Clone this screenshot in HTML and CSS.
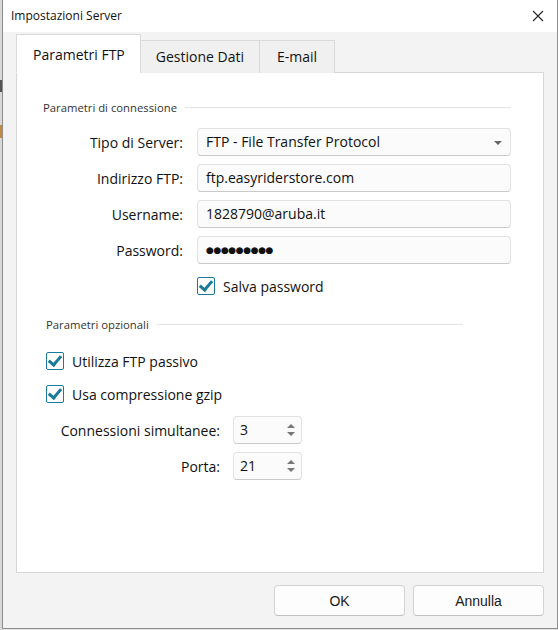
FILE: index.html
```html
<!DOCTYPE html>
<html lang="it">
<head>
<meta charset="UTF-8">
<title>Impostazioni Server</title>
<link rel="stylesheet" href="styles.css">
</head>
<body>
	<div class="edge"></div>
	<div class="window">
		<div class="titlebar">
			<span class="title">Impostazioni Server</span>
			<svg class="close" width="12" height="12" viewBox="0 0 12 12">
				<path d="M1 1 L11 11 M11 1 L1 11" stroke="#222" stroke-width="1.1" fill="none"/>
			</svg>
		</div>

		<div class="body">
			<div class="tabs">
				<div class="tab active">Parametri FTP</div>
				<div class="tab">Gestione Dati</div>
				<div class="tab">E-mail</div>
			</div>

			<div class="panel">
				<div class="group conn">
					<div class="group-head"><span>Parametri di connessione</span><i></i></div>
					<div class="rows">
						<label class="lbl">Tipo di Server:</label>
						<div class="field select">FTP - File Transfer Protocol<span class="caret"></span></div>

						<label class="lbl">Indirizzo FTP:</label>
						<div class="field">ftp.easyriderstore.com</div>

						<label class="lbl">Username:</label>
						<div class="field">1828790@aruba.it</div>

						<label class="lbl">Password:</label>
						<div class="field pwd">●●●●●●●●●</div>

						<span></span>
						<div class="check"><span class="box"></span>Salva password</div>
					</div>
				</div>

				<div class="group opt">
					<div class="group-head"><span>Parametri opzionali</span><i></i></div>
					<div class="check"><span class="box"></span>Utilizza FTP passivo</div>
					<div class="check"><span class="box"></span>Usa compressione gzip</div>
					<div class="spins">
						<label class="lbl">Connessioni simultanee:</label>
						<div class="field spin">3<span class="arrows"><b class="up"></b><b class="down"></b></span></div>

						<label class="lbl">Porta:</label>
						<div class="field spin">21<span class="arrows"><b class="up"></b><b class="down"></b></span></div>
					</div>
				</div>
			</div>

			<div class="footer">
				<button class="btn">OK</button>
				<button class="btn">Annulla</button>
			</div>
		</div>
	</div>
</body>
</html>
```

FILE: styles.css
```css
html, body {
	margin: 0;
	height: 100%;
}

body {
	display: flex;
	background: #e4e4e4;
	font-family: "Open Sans", "Noto Sans", sans-serif;
	font-size: 14px;
	color: #111;
	overflow: hidden;
}

.edge {
	width: 2px;
	background: linear-gradient(#d8d8d8 0 80px, #555 80px 92px, #d8d8d8 92px 125px, #c08a40 125px 138px, #d8d8d8 138px);
}

.window {
	width: 554px;
	height: 628px;
	border: 1px solid #8c8c8c;
	border-top: none;
	background: #f3f3f3;
	display: flex;
	flex-direction: column;
}

.titlebar {
	height: 32px;
	background: #fff;
	display: flex;
	align-items: center;
	justify-content: space-between;
	padding: 0 13px 0 8px;
}

.title {
	font-size: 12px;
	color: #111;
	margin-top: -2px;
}

.close {
	margin-top: -1px;
}

.body {
	padding: 4px 13px 0 13px;
	display: flex;
	flex-direction: column;
}

.tabs {
	display: flex;
	align-items: flex-end;
	height: 37px;
	position: relative;
	z-index: 1;
	margin-bottom: -1px;
}

.tab {
	height: 32px;
	line-height: 32px;
	padding: 0 15px;
	background: #f0f0f0;
	border: 1px solid #d9d9d9;
	border-bottom: none;
	margin-left: -1px;
	color: #111;
}

.tab:last-child {
	padding: 0 17px;
}

.tab.active {
	height: 37px;
	line-height: 40px;
	background: #fff;
	margin-left: 0;
	padding: 0 15px 0 16px;
	border-bottom: 1px solid #fff;
}

.panel {
	height: 499px;
	background: #fff;
	border: 1px solid #d6d6d6;
}

.group-head {
	display: flex;
	align-items: center;
	height: 16px;
	font-size: 11.3px;
	color: #333;
}

.group-head i {
	flex: 1;
	height: 1px;
	background: #e3e3e3;
	margin-left: 8px;
}

.conn {
	margin: 26px 0 0 26px;
	width: 468px;
}

.rows {
	display: grid;
	grid-template-columns: 140px 314px;
	column-gap: 14px;
	row-gap: 8px;
	margin-top: 13px;
}

.lbl {
	text-align: right;
	align-self: center;
}

.field {
	height: 26px;
	line-height: 26px;
	border: 1px solid #e2e2e2;
	border-bottom-color: #c9c9c9;
	border-radius: 4px;
	background: #fbfbfb;
	padding: 0 8px;
	position: relative;
	white-space: nowrap;
}

.caret {
	position: absolute;
	right: 8px;
	top: 12px;
	border: 4px solid transparent;
	border-top: 4px solid #666;
	border-bottom: none;
}

.pwd {
	font-family: "DejaVu Sans", sans-serif;
	font-size: 9px;
	letter-spacing: -0.4px;
}

.check {
	display: flex;
	align-items: center;
	height: 28px;
}

.box {
	width: 16px;
	height: 16px;
	border: 1px solid #1b7a99;
	border-radius: 2px;
	background: #fff;
	margin-right: 8px;
	position: relative;
}

.box::after {
	content: "";
	position: absolute;
	left: 4px;
	top: 0px;
	width: 5px;
	height: 10px;
	border: solid #1b7a99;
	border-width: 0 3px 3px 0;
	transform: rotate(40deg);
}

.opt {
	margin: 16px 0 0 29px;
	width: 417px;
}

.opt .group-head {
	margin-bottom: 15px;
}

.opt .check + .check {
	margin-top: 5px;
}

.spins {
	display: grid;
	grid-template-columns: 174px 69px;
	column-gap: 13px;
	row-gap: 8px;
	margin-top: 8px;
}

.spin {
	height: 26px;
	padding: 0 6px;
}

.arrows {
	position: absolute;
	right: 6px;
	top: 7px;
	display: flex;
	flex-direction: column;
	gap: 4px;
}

.arrows b {
	display: block;
	border: 4px solid transparent;
}

.arrows .up {
	border-top: none;
	border-bottom: 4px solid #777;
}

.arrows .down {
	border-bottom: none;
	border-top: 4px solid #777;
}

.footer {
	display: flex;
	justify-content: flex-end;
	gap: 8px;
	margin-top: 12px;
}

.btn {
	width: 131px;
	height: 31px;
	font-family: "Liberation Sans", Arial, sans-serif;
	font-size: 14px;
	color: #1a1a1a;
	background: #fdfdfd;
	border: 1px solid #d3d3d3;
	border-bottom-color: #c0c0c0;
	border-radius: 4px;
}
```
